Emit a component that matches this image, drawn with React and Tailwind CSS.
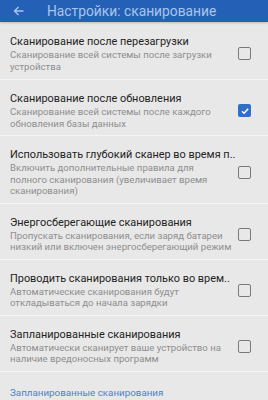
import React from 'react';

const rows = [
    { title: 'Сканирование после перезагрузки', desc: ['Сканирование всей системы после загрузки', 'устройства'], checked: false, first: true },
    { title: 'Сканирование после обновления', desc: ['Сканирование всей системы после каждого', 'обновления базы данных'], checked: true },
    { title: 'Использовать глубокий сканер во время п..', desc: ['Включить дополнительные правила для', 'полного сканирования (увеличивает время', 'сканирования)'], checked: false },
    { title: 'Энергосберегающие сканирования', desc: ['Пропускать сканирования, если заряд батареи', 'низкий или включен энергосберегающий режим'], checked: false },
    { title: 'Проводить сканирования только во врем..', desc: ['Автоматические сканирования будут', 'откладываться до начала зарядки'], checked: false },
    { title: 'Запланированные сканирования', desc: ['Автоматически сканирует ваше устройство на', 'наличие вредоносных программ'], checked: false },
];

const Checkbox = ({ checked }) =>
    checked ? (
        <div className="w-[13px] h-[13px] rounded-[2px] bg-[#2f6fc6] flex items-center justify-center">
            <svg width="10" height="10" viewBox="0 0 10 10" fill="none">
                <path d="M2 5.2 L4.1 7.2 L8.2 2.8" stroke="#ffffff" strokeWidth="1.5" />
            </svg>
        </div>
    ) : (
        <div className="w-[13px] h-[13px] rounded-[2px] border-[1.5px] border-[#7a7a7a]" />
    );

const Row = ({ title, desc, checked, first }) => (
    <div className={`flex items-center border-b border-[#f4f4f4] pl-[10px] pr-[17px] ${first ? 'pt-[13px] pb-[7px]' : 'pt-[12px] pb-[6px]'}`}>
        <div className="flex-1 min-w-0">
            <div className="text-[10.9px] leading-[14px] text-[#232323] whitespace-nowrap">{title}</div>
            {desc.map((d) => (
                <div key={d} className="text-[9.6px] leading-[11.5px] text-[#8e8e8e] whitespace-nowrap">{d}</div>
            ))}
        </div>
        <Checkbox checked={checked} />
    </div>
);

export default function App() {
    return (
        <div className="w-[268px] h-[400px] overflow-hidden bg-[#e8e8e8] font-['Roboto',sans-serif]">
            <header className="h-[22px] bg-[#2461b6] flex items-center shadow-[0_1px_2px_rgba(0,0,0,0.2)]">
                <svg className="ml-[13px]" width="11" height="10" viewBox="0 0 11 10" fill="none">
                    <path d="M10.5 5 H1.5 M5.5 1 L1.5 5 L5.5 9" stroke="#a9c4ea" strokeWidth="1.4" />
                </svg>
                <span className="ml-[23px] text-[13.8px] text-[#a8c5ec] whitespace-nowrap">Настройки: сканирование</span>
            </header>
            {rows.map((r) => (
                <Row key={r.title} {...r} />
            ))}
            <div className="pl-[10px] pt-[14px] text-[9.8px] leading-[13px] text-[#4f82c9]">Запланированные сканирования</div>
        </div>
    );
}
